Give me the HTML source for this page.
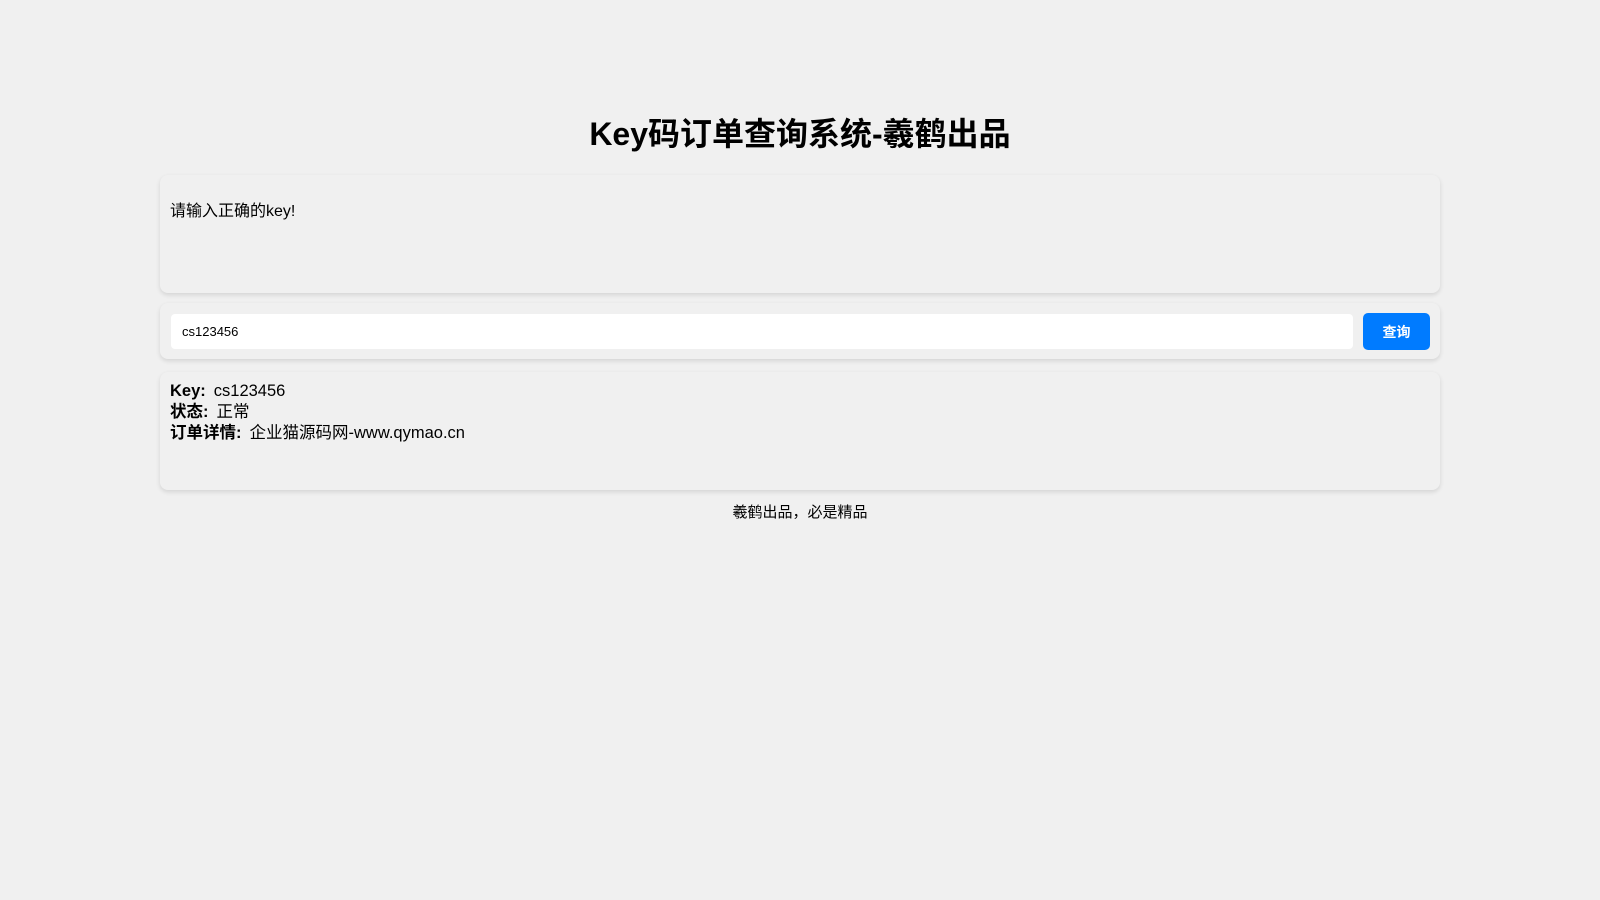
<!DOCTYPE html>
<html><head><meta charset="utf-8"><style>
body{margin:0;background:#f0f0f0;font-family:"Liberation Sans","Noto Sans CJK SC",sans-serif;color:#000;}
.c{width:1280px;margin:0 auto;position:relative;height:900px;}
h1{position:absolute;top:110px;left:0;right:0;margin:0;text-align:center;font-size:32px;font-weight:bold;line-height:48px;}
.card{position:absolute;left:0;width:1280px;background:#f0f0f0;border-radius:8px;box-shadow:0 2px 5px rgba(0,0,0,.12);box-sizing:border-box;padding:10px;}
.msg{top:175px;height:118px;font-size:16px;padding-top:22px;}
.q{top:303px;height:56px;}
.q .in{position:absolute;left:11px;top:11px;width:1182px;height:35px;background:#fff;border-radius:4px;font-size:13px;line-height:35px;padding-left:11px;box-sizing:border-box;}
.q .b{position:absolute;left:1203px;top:10px;width:67px;height:37px;background:#007bff;border-radius:5px;color:#fff;font-size:14px;font-weight:bold;text-align:center;line-height:38px;}
.r{top:372px;height:118px;font-size:16.5px;line-height:21px;padding-top:9px;}
.r b{margin-right:8px}
.f{position:absolute;top:502px;left:0;right:0;text-align:center;font-size:15px;line-height:22px;}
</style></head><body><div class="c">
<h1>Key码订单查询系统-羲鹤出品</h1>
<div class="card msg">请输入正确的key!</div>
<div class="card q"><div class="in">cs123456</div><div class="b">查询</div></div>
<div class="card r"><div><b>Key:</b>cs123456</div><div><b>状态:</b>正常</div><div><b>订单详情:</b>企业猫源码网-www.qymao.cn</div></div>
<div class="f">羲鹤出品，必是精品</div>
</div></body></html>
